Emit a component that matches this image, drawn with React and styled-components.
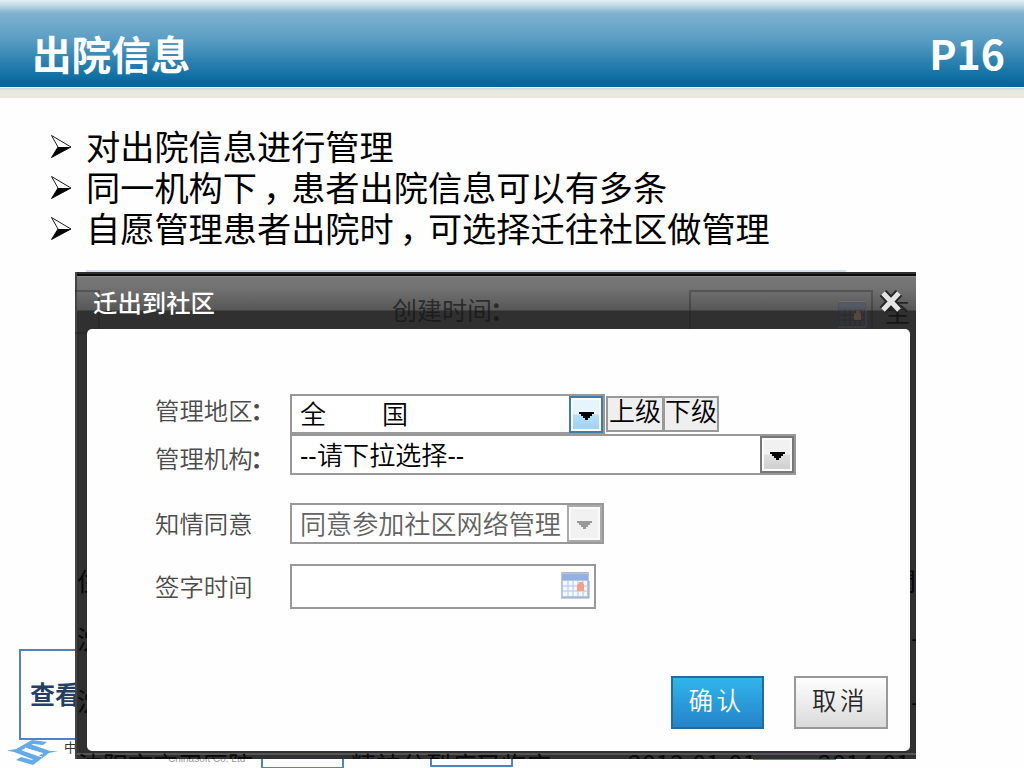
import React from "react";
import styled, { createGlobalStyle } from "styled-components";

const GlobalStyle = createGlobalStyle`
  * {
    box-sizing: border-box;
  }
  body {
    margin: 0;
    background: #fefefe;
    font-family: "Noto Sans CJK SC", "Noto Sans", sans-serif;
  }
`;

const Slide = styled.div`
  position: relative;
  width: 1024px;
  height: 768px;
  overflow: hidden;
  background: #fefefe;
`;

const Header = styled.header`
  display: flex;
  justify-content: space-between;
  align-items: center;
  height: 87px;
  padding: 19px 19px 0 32px;
  color: #fff;
  background: linear-gradient(
    #e4eff4 0,
    #c5dbe6 5px,
    #80b2cf 13px,
    #5c9fc4 38px,
    #2980b0 63px,
    #00659c 86px
  );
`;

const Title = styled.h1`
  margin: 0;
  font-size: 39.6px;
  font-weight: 700;
  line-height: 60px;
`;

const PageNumber = styled(Title)`
  padding-bottom: 3px;
  font-size: 41px;
`;

const HeaderEdge = styled.div`
  height: 11px;
  border-top: 1px solid #fff;
  background: linear-gradient(#c4d7e5 0, #e6e6dd 2px, #ebe9dc 5px, #e9e6e1 10px);
`;

const Points = styled.ul`
  margin: 0;
  padding: 28px 0 0 50px;
  list-style: none;
`;

const Point = styled.li`
  display: flex;
  align-items: center;
  height: 41px;
  font-size: 34.2px;
  line-height: 41px;
  color: #000;
  white-space: nowrap;
`;

const PointText = styled.span`
  padding-bottom: 3px;
`;

const Arrow = styled.svg`
  width: 22px;
  height: 25px;
  margin-right: 14px;
`;

const Comma = styled.span`
  display: inline-block;
  width: 1em;
  text-indent: 6px;
`;

const BackLine = styled.div`
  position: absolute;
  top: 270px;
  left: 86px;
  width: 760px;
  height: 2px;
  background: #cfdff4;
`;

const Callout = styled.div`
  position: absolute;
  left: ${(p) => p.$x}px;
  top: ${(p) => p.$y}px;
  width: ${(p) => p.$w}px;
  height: ${(p) => p.$h}px;
  padding-left: 9px;
  border: 2px solid #5283c0;
  color: #243f64;
  font-size: 25px;
  font-weight: 700;
  line-height: 84px;
  white-space: nowrap;
  overflow: hidden;
`;

const Logo = styled.svg`
  position: absolute;
  left: 7px;
  top: 738px;
`;

const Company = styled.span`
  position: absolute;
  left: ${(p) => p.$x}px;
  top: ${(p) => p.$y}px;
  font-family: ${(p) =>
    p.$latin ? '"Liberation Sans", sans-serif' : '"Noto Sans CJK SC", sans-serif'};
  font-size: ${(p) => (p.$latin ? 10 : 13)}px;
  line-height: 14px;
  color: ${(p) => (p.$latin ? "#999" : "#333")};
  white-space: nowrap;
`;

const Dialog = styled.section`
  position: absolute;
  left: 75px;
  top: 272px;
  width: 841px;
  height: 487px;
  padding: 0 6px 8px 12px;
  overflow: hidden;
  color: #4c4c4c;
  background: linear-gradient(
    #2f2f31 0,
    #2f2f31 2px,
    #0c0c0c 2px,
    #0c0c0c 4px,
    #8b8b8b 4px,
    #777 6px,
    #727272 16px,
    #575757 38px,
    #303030 39px,
    #303030 481px,
    #555 481px,
    #555 483px,
    #303030 483px
  );
  box-shadow: inset 2px 0 #454545;
`;

const TitleBar = styled.div`
  position: relative;
  z-index: 1;
  display: flex;
  justify-content: space-between;
  height: 57px;
  padding: 14px 7px 0 6px;
`;

const DialogTitle = styled.h2`
  margin: 0;
  font-size: 24.4px;
  font-weight: 500;
  line-height: 32px;
  color: #fff;
`;

const Close = styled.svg`
  width: 24px;
  height: 26px;
  margin-top: 2px;
`;

const Ghost = styled.span`
  position: absolute;
  left: ${(p) => p.$x}px;
  top: ${(p) => p.$y}px;
  font-size: 25px;
  line-height: 28px;
  color: ${(p) => p.$color || "#080808"};
  white-space: nowrap;
`;

const GhostField = styled.div`
  position: absolute;
  left: ${(p) => p.$x}px;
  top: 18px;
  width: ${(p) => p.$w}px;
  height: 44px;
  padding: 8px 4px;
  border: 2px solid rgba(25, 25, 25, 0.3);
  text-align: right;
`;

const Panel = styled.div`
  position: relative;
  height: 422px;
  padding: 65px 22px 0 68px;
  border-radius: 5px;
  background: #fefefe;
`;

const Row = styled.div`
  display: flex;
  height: ${(p) => p.$h}px;
  margin-bottom: ${(p) => p.$gap || 0}px;
`;

const Label = styled.label`
  width: 135px;
  padding-top: ${(p) => p.$top}px;
  font-size: 24.4px;
  font-weight: 350;
  line-height: 30px;
  white-space: nowrap;
`;

const Colon = styled.span`
  margin-left: -2px;
  font-weight: 700;
`;

const Field = styled.div`
  display: flex;
  justify-content: space-between;
  width: ${(p) => p.$w}px;
  height: 100%;
  border: 2px solid #999;
  padding: ${(p) => (p.$date ? "5px 4px 0 0" : 0)};
  background: #fff;
  color: ${(p) => (p.$disabled ? "#626262" : "#000")};
  font-size: 26.1px;
  font-weight: 350;
  line-height: ${(p) => p.$h - 5}px;
  white-space: pre;
`;

const Value = styled.span`
  padding-left: 8px;
`;

const Spacer = styled.span`
  display: inline-block;
  width: 56px;
`;

const Dashes = styled.span`
  display: inline-block;
  width: 17px;
  font-family: "Liberation Sans", sans-serif;
  font-size: 25px;
`;

const DropButton = styled.span`
  display: flex;
  align-items: center;
  justify-content: center;
  width: ${(p) => (p.$kind === "off" ? 35 : 34)}px;
  height: 37px;
  padding-top: 3px;
  border: 2px solid
    ${(p) => (p.$kind === "active" ? "#3e7da8" : p.$kind === "off" ? "#aaa" : "#777")};
  box-shadow: inset 0 0 0 2px #fafafa;
  background: ${(p) =>
    p.$kind === "active"
      ? "linear-gradient(#e5f4fd 48%, #b5dff7 52%, #9bd2f3)"
      : p.$kind === "off"
      ? "#f1f1f1"
      : "linear-gradient(#f1f1f1 48%, #dedede 52%, #cecece)"};
`;

const LevelButton = styled.button`
  width: ${(p) => p.$w}px;
  height: 36px;
  margin: 2px 0 0 ${(p) => p.$left || 0}px;
  padding: 0 0 8px;
  border: 2px solid #999;
  background: #efefef;
  color: #000;
  font-family: inherit;
  font-size: 26px;
  font-weight: 350;
  line-height: 24px;
  white-space: nowrap;
`;

const Actions = styled.div`
  display: flex;
  justify-content: flex-end;
  gap: 30px;
  margin-top: 67px;
`;

const ActionButton = styled.button`
  width: ${(p) => (p.$primary ? 93 : 94)}px;
  height: 53px;
  padding: 0 2px 6px 0;
  border: 2px solid ${(p) => (p.$primary ? "#246a9b" : "#999")};
  background: ${(p) =>
    p.$primary
      ? "linear-gradient(#31b5eb, #2483ca)"
      : "linear-gradient(#fefefe, #dadada)"};
  color: ${(p) => (p.$primary ? "#fff" : "#262626")};
  font-family: inherit;
  font-size: 24.5px;
  font-weight: 350;
  letter-spacing: 3.5px;
`;

const Triangle = ({ color = "#000" }) => (
  <svg width="15" height="8" viewBox="0 0 15 8">
    <path d="M0 0h15v2h-2v2h-2v2H9v2H6V6H4V4H2V2H0z" fill={color} />
  </svg>
);

const Calendar = ({ dim }) => (
  <svg width="30" height="29" viewBox="0 0 30 29" opacity={dim ? 0.2 : 1}>
    <path d="M1 2q0-1 2-1h24q2 0 2 1v25H1z" fill={dim ? "#203050" : "#b3c8e6"} />
    <path d="M1 2q0-1 2-1h24q2 0 2 1H1z" fill="#b8b4b0" />
    <path d="M2 3h26v6H2z" fill={dim ? "#334a80" : "#94b1e4"} />
    <path d="M3 10h24v15H3z" fill={dim ? "#444" : "#f5f9ff"} />
    <path
      d="M3 15h24M3 20h24M8 10v15M13 10v15M18 10v15M23 10v15"
      stroke={dim ? "#223" : "#bed3f1"}
      strokeWidth="1.4"
    />
    <path d="M18 13h1v-2h4v2h1v7h-7v-6z" fill="#efa085" />
    <path d="M1 27h28V10" fill="none" stroke="#91a4c0" />
  </svg>
);

const points = ["对出院信息进行管理", "同一机构下，患者出院信息可以有多条", "自愿管理患者出院时，可选择迁往社区做管理"];

function App() {
  return (
    <Slide>
      <GlobalStyle />
      <Header>
        <Title>出院信息</Title>
        <PageNumber>P16</PageNumber>
      </Header>
      <HeaderEdge />

      <Points>
        {points.map((text) => {
          const [first, rest] = text.split("，");
          return (
            <Point key={text}>
              <Arrow viewBox="0 0 22 25">
                <path d="M1.5 1.5 21 13 1.5 23.5 8 13z" fill="#fff" stroke="#000" strokeWidth=".9" />
                <path d="M8 13h13L1.5 23.5z" />
              </Arrow>
              <PointText>
                {first}
                {rest && <Comma>，</Comma>}
                {rest}
              </PointText>
            </Point>
          );
        })}
      </Points>

      <BackLine />
      <Callout $x={19} $y={649} $w={120} $h={91}>
        查看
      </Callout>
      <Callout $x={261} $y={720} $w={83} $h={49} />
      <Callout $x={430} $y={720} $w={83} $h={47} />
      <Callout $x={753} $y={720} $w={83} $h={40} />
      <Logo width="51" height="28" viewBox="0 0 51 28">
        <path d="M0 12.5 9 11 25 2l15 2-4 3-10-1-11 6 20 7-5 4-23-9z" fill="#62ace9" />
        <path d="M51 13l-9 2-16 12-17-5 5-3 11 3 11-7-18-5 5-4 20 7z" fill="#62ace9" />
        <path d="M15 12l20 7M18 10l18 6" stroke="#fefefe" strokeWidth="1" />
      </Logo>
      <Company $x={64} $y={740}>中</Company>
      <Company $x={168} $y={752} $latin>Chinasoft Co. Ltd</Company>

      <Dialog>
        <Ghost $x={317} $y={23} $color="rgba(20,20,20,.7)">
          创建时间<Colon>：</Colon>
        </Ghost>
        <Ghost $x={810} $y={25} $color="rgba(10,10,10,.7)">至</Ghost>
        <GhostField $x={-10} $w={35} />
        <GhostField $x={614} $w={184}>
          <Calendar dim />
        </GhostField>
        <Ghost $x={2} $y={294}>住</Ghost>
        <Ghost $x={2} $y={352}>沈</Ghost>
        <Ghost $x={2} $y={414}>沈</Ghost>
        <Ghost $x={816} $y={294}>間</Ghost>
        <Ghost $x={836} $y={350}>-</Ghost>
        <Ghost $x={836} $y={414}>-</Ghost>
        <Ghost $x={3} $y={478}>沈阳市京卫医院</Ghost>
        <Ghost $x={276} $y={478}>精神分裂症又临床</Ghost>
        <Ghost $x={553} $y={476}>2013-01-01</Ghost>
        <Ghost $x={743} $y={476}>2014-01</Ghost>

        <TitleBar>
          <DialogTitle>迁出到社区</DialogTitle>
          <Close viewBox="0 0 24 26">
            <path d="M4 5 20 22M20 5 4 22" stroke="#242424" strokeWidth="9" />
            <path d="M4 5 20 22M20 5 4 22" stroke="#e4e4e4" strokeWidth="5" />
          </Close>
        </TitleBar>

        <Panel>
          <Row $h={40}>
            <Label $top={1}>
              管理地区<Colon>：</Colon>
            </Label>
            <Field $w={315} $h={39}>
              <Value>
                全<Spacer />国
              </Value>
              <DropButton $kind="active">
                <Triangle />
              </DropButton>
            </Field>
            <LevelButton $w={58} $left={1}>上级</LevelButton>
            <LevelButton $w={56} $left={-1}>下级</LevelButton>
          </Row>
          <Row $h={41} $gap={28}>
            <Label $top={9}>
              管理机构<Colon>：</Colon>
            </Label>
            <Field $w={506} $h={41}>
              <Value>
                <Dashes>--</Dashes>请下拉选择<Dashes>--</Dashes>
              </Value>
              <DropButton>
                <Triangle />
              </DropButton>
            </Field>
          </Row>
          <Row $h={41} $gap={20}>
            <Label $top={5}>知情同意</Label>
            <Field $w={314} $h={41} $disabled>
              <Value>同意参加社区网络管理</Value>
              <DropButton $kind="off">
                <Triangle color="#999" />
              </DropButton>
            </Field>
          </Row>
          <Row $h={45}>
            <Label $top={7}>签字时间</Label>
            <Field $w={306} $h={45} $date>
              <span />
              <Calendar />
            </Field>
          </Row>
          <Actions>
            <ActionButton $primary>确认</ActionButton>
            <ActionButton>取消</ActionButton>
          </Actions>
        </Panel>
      </Dialog>
    </Slide>
  );
}

export default App;
